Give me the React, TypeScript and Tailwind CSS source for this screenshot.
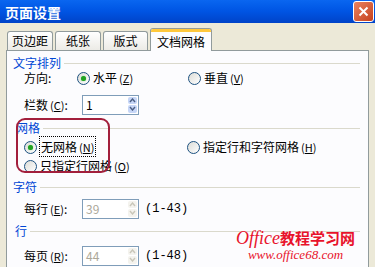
import React from 'react'

const font = { fontFamily: '"Noto Sans CJK SC", "Noto Sans", sans-serif' }

function Radio({ checked }: { checked?: boolean }) {
  return (
    <span className="flex h-[13px] w-[13px] shrink-0 items-center justify-center rounded-full border border-[#1C5180] bg-gradient-to-br from-[#DCDCD7] to-white">
      {checked && <span className="h-[5px] w-[5px] rounded-full bg-[#21A121] shadow-[0_0_1px_#4DD24D]" />}
    </span>
  )
}

function Hot({ k }: { k: string }) {
  return (
    <span className="ml-[2px] text-[11px]">
      (<span className="underline">{k}</span>)
    </span>
  )
}

function Spin({ value, disabled }: { value: string; disabled?: boolean }) {
  return (
    <div className="flex h-[20px] w-[57px] border border-[#7F9DB9] bg-white">
      <div className={`flex flex-1 items-center pl-[3px] text-[12px] ${disabled ? 'text-[#ACA899]' : 'text-black'}`}>
        {value}
      </div>
      <div className="flex w-[11px] flex-col gap-[1px] p-[1px]">
        {['M1 4 L3.5 1 L6 4', 'M1 1 L3.5 4 L6 1'].map((d) => (
          <div
            key={d}
            className={`flex flex-1 items-center justify-center rounded-[2px] ${disabled ? 'bg-[#F4F3EE]' : 'bg-[#C6D6F7]'}`}
          >
            <svg width="7" height="5" viewBox="0 0 7 5">
              <path d={d} fill="none" stroke={disabled ? '#C9C7BA' : '#4D6185'} strokeWidth="1.4" />
            </svg>
          </div>
        ))}
      </div>
    </div>
  )
}

function GroupLabel({ text, className }: { text: string; className?: string }) {
  return (
    <div className={`flex h-[12px] items-center pr-[8px] ${className ?? ''}`}>
      <span className="text-[12px] leading-none text-[#0046D5]">{text}</span>
      <div className="ml-[3px] h-px flex-1 bg-[#DAD9CC]" />
    </div>
  )
}

export default function App() {
  return (
    <div
      className="relative h-[267px] w-[375px] overflow-hidden bg-[#ECE9D8] text-[12px] leading-none text-black"
      style={font}
    >
      {/* Title bar */}
      <div className="flex h-[23px] items-center justify-between bg-gradient-to-b from-[#0A66F0] via-[#0054E3] to-[#0043C8] pl-[5px] pr-[1px]">
        <span className="text-[14px] font-bold leading-none text-white">页面设置</span>
        <div className="flex h-[21px] w-[21px] items-center justify-center rounded-[3px] border border-white bg-gradient-to-br from-[#E9825F] to-[#C5401B]">
          <svg width="11" height="11" viewBox="0 0 11 11">
            <path d="M1.5 1.5 L9.5 9.5 M9.5 1.5 L1.5 9.5" stroke="white" strokeWidth="2" />
          </svg>
        </div>
      </div>

      {/* Tabs */}
      <div className="flex h-[27px] items-end pl-[7px]">
        {[
          ['页边距', 'w-[46px]'],
          ['纸张', 'w-[46px] ml-[2px]'],
          ['版式', 'w-[45px] ml-[2px]'],
        ].map(([t, w]) => (
          <div
            key={t}
            className={`flex h-[19px] items-center justify-center rounded-t-[3px] border border-b-0 border-[#919B9C] bg-gradient-to-b from-white to-[#ECEBE6] text-[12px] ${w}`}
          >
            {t}
          </div>
        ))}
        <div className="relative z-10 mb-[-1px] ml-[2px] flex h-[23px] w-[62px] flex-col rounded-t-[3px] border border-b-0 border-[#919B9C] bg-[#FCFCFE]">
          <div className="h-[3px] rounded-t-[2px] bg-[#FFC83C]" />
          <div className="flex flex-1 items-center justify-center">文档网格</div>
        </div>
      </div>

      {/* Panel */}
      <div className="ml-[6px] h-[230px] w-[363px] border border-[#919B9C] bg-[#FCFCFE] pl-[6px]">
        <GroupLabel text="文字排列" className="mt-[6px]" />
        <div className="flex h-[18px] items-center pl-[11px]">
          <span className="w-[53px]">方向:</span>
          <Radio checked />
          <span className="ml-[3px] w-[95px]">
            水平<Hot k="Z" />
          </span>
          <Radio />
          <span className="ml-[3px]">
            垂直<Hot k="V" />
          </span>
        </div>
        <div className="mt-[7px] flex h-[21px] items-center pl-[11px]">
          <span className="w-[58px]">
            栏数<Hot k="C" />:
          </span>
          <Spin value="1" />
        </div>

        <GroupLabel text="网格" className="mt-[7px] pl-[3px]" />
        <div className="mt-[4px] flex h-[18px] items-center pl-[11px]">
          <Radio checked />
          <span className="ml-[2px] w-[148px]">
            <span className="border border-dotted border-black px-[1px] py-[1px]">
              无网格<Hot k="N" />
            </span>
          </span>
          <Radio />
          <span className="ml-[3px]">
            指定行和字符网格<Hot k="H" />
          </span>
        </div>
        <div className="mt-[1px] flex h-[18px] items-center pl-[11px]">
          <Radio />
          <span className="ml-[3px]">
            只指定行网格<Hot k="O" />
          </span>
        </div>

        <GroupLabel text="字符" className="mt-[6px]" />
        <div className="mt-[5px] flex h-[21px] items-center pl-[11px]">
          <span className="w-[58px]">
            每行<Hot k="E" />:
          </span>
          <Spin value="39" disabled />
          <span className="ml-[6px] text-[12px]" style={{ fontFamily: '"Liberation Mono", monospace' }}>
            (1-43)
          </span>
        </div>

        <GroupLabel text="行" className="mt-[6px] pl-[2px]" />
        <div className="mt-[8px] flex h-[21px] items-center pl-[11px]">
          <span className="w-[58px]">
            每页<Hot k="R" />:
          </span>
          <Spin value="44" disabled />
          <span className="ml-[6px] text-[12px]" style={{ fontFamily: '"Liberation Mono", monospace' }}>
            (1-48)
          </span>
        </div>
      </div>

      {/* Red annotation */}
      <div className="pointer-events-none absolute left-[16px] top-[118px] h-[55px] w-[94px] rounded-[9px] border-2 border-[#A21F3C]" />

      {/* Watermark */}
      <div className="pointer-events-none absolute left-[236px] top-[229px] flex flex-col items-center text-[#E8132B]">
        <div className="flex items-baseline leading-none">
          <span className="text-[18px] italic" style={{ fontFamily: '"Liberation Serif", serif' }}>
            Office
          </span>
          <span className="text-[15px] font-bold">教程学习网</span>
        </div>
        <span className="mt-[1px] text-[13px] italic leading-none" style={{ fontFamily: '"Liberation Serif", serif' }}>
          www.office68.com
        </span>
      </div>
    </div>
  )
}
